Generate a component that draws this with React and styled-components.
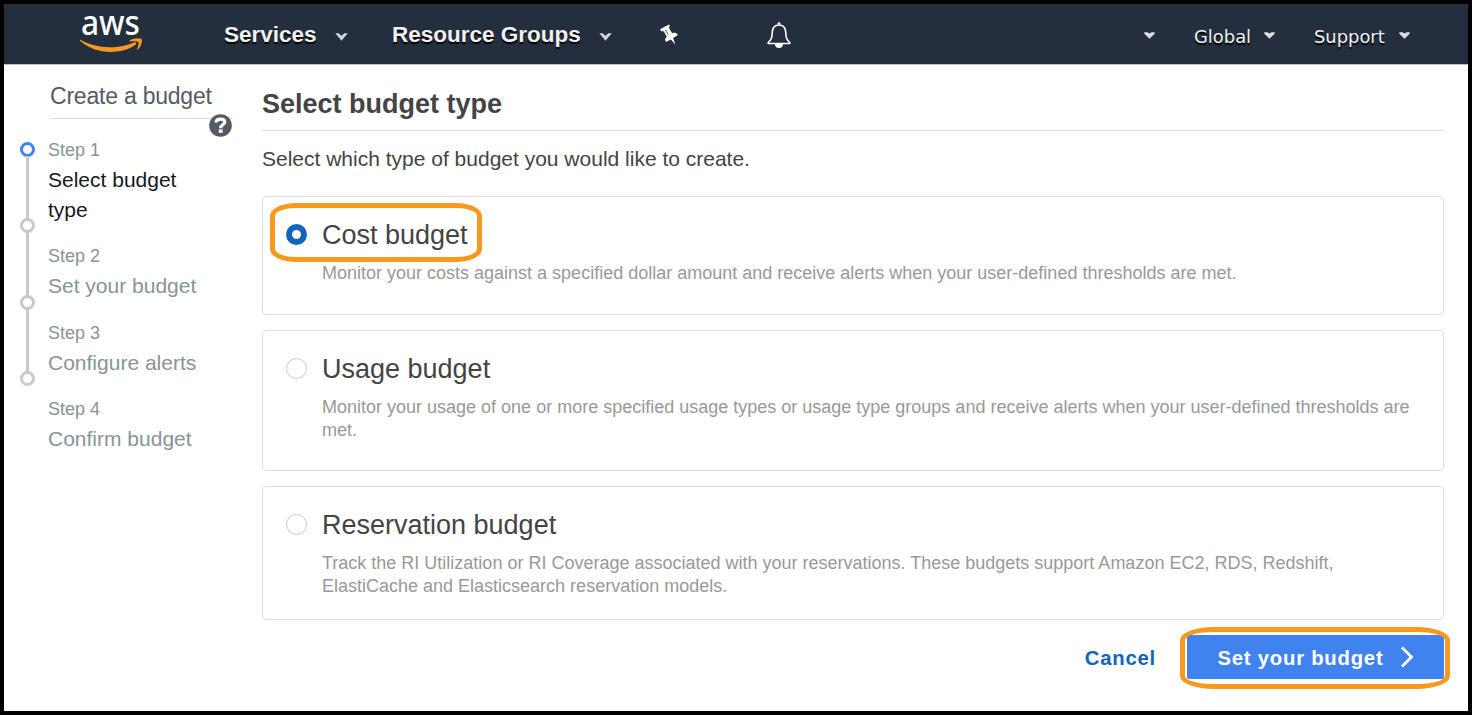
import React from "react";
import styled, { createGlobalStyle } from "styled-components";

const GlobalStyle = createGlobalStyle`
  *, *::before, *::after { box-sizing: border-box; }
  body { margin: 0; background: #fff; font-family: "Liberation Sans", Arial, sans-serif; }
  h1, h2, p, ol { margin: 0; padding: 0; font-weight: normal; }
  button { font-family: inherit; border: 0; background: none; padding: 0; cursor: pointer; }
`;

const Window = styled.div`
  width: 1472px;
  height: 715px;
  border: 4px solid #000;
  background: #fff;
  display: flex;
  flex-direction: column;
  overflow: hidden;
`;

const TopBar = styled.header`
  flex: none;
  height: 61px;
  padding-left: 75px;
  background: #232f3e;
  border-bottom: 1px solid #b9bdc2;
  display: flex;
  align-items: center;
`;

const Logo = styled.svg`
  flex: none;
  width: 66px;
  height: 60px;
  display: block;
  overflow: visible;
`;

const MenuButton = styled.button`
  display: flex;
  align-items: center;
  gap: ${(p) => (p.$small ? 13 : 18)}px;
  margin-left: ${(p) => p.$indent}px;
  padding-top: ${(p) => (p.$small ? 5 : 2)}px;
  color: #f0f0f0;
  font: ${(p) =>
    p.$small
      ? '17.9px/24px "DejaVu Sans", Verdana, sans-serif'
      : 'bold 22.5px/28px "Liberation Sans", Arial, sans-serif'};
  text-shadow: 0 2px 1px #000;
  white-space: nowrap;
`;

const MenuLabel = styled.span`
  width: ${(p) => p.$width}px;
  text-align: left;
`;

const CaretIcon = styled.svg`
  flex: none;
  display: block;
  margin-top: ${(p) => (p.$small ? -2 : 3)}px;
`;

const IconButton = styled.button`
  margin-left: ${(p) => p.$indent}px;
  padding-top: 2px;
  display: flex;
  svg { display: block; }
`;

const Body = styled.div`
  flex: 1;
  display: flex;
`;

const Sidebar = styled.aside`
  flex: none;
  width: 258px;
  padding: 16px 0 0 16px;
`;

const SidebarHeader = styled.div`
  position: relative;
  width: 182px;
  height: 38px;
  margin-left: 30px;
  border-bottom: 1px solid #dedede;
`;

const SidebarTitle = styled.h2`
  font-size: 23px;
  line-height: 30px;
  letter-spacing: -0.22px;
  color: #545b64;
  white-space: nowrap;
`;

const HelpBadge = styled.svg`
  position: absolute;
  right: 0;
  top: 33px;
`;

const Progress = styled.div`
  display: flex;
  gap: 13px;
  margin-top: 16px;
`;

const Rail = styled.div`
  width: 15px;
  padding-top: 7px;
  display: flex;
  flex-direction: column;
  align-items: center;
`;

const Bullet = styled.span`
  flex: none;
  width: 15px;
  height: 15px;
  border-radius: 50%;
  border: 3px solid ${(p) => (p.$active ? "#4183ee" : "#c9c9c9")};
  background: #fff;
`;

const RailLine = styled.span`
  flex: none;
  width: 3px;
  height: 63.4px;
  margin: -1px 0;
  background: #c9c9c9;
`;

const StepList = styled.ol`
  list-style: none;
  display: flex;
  flex-direction: column;
  gap: 16.3px;
`;

const Step = styled.li`
  width: 165px;
  line-height: 30px;
  color: #879596;
`;

const StepNumber = styled.div`
  font-size: 18px;
`;

const StepTitle = styled.div`
  font-size: 21px;
  color: ${(p) => (p.$active ? "#16191f" : "inherit")};
`;

const Main = styled.main`
  width: 1182px;
  padding-top: 21px;
`;

const PageTitle = styled.h1`
  height: 45px;
  border-bottom: 1px solid #dedede;
  font-size: 27px;
  line-height: 36px;
  font-weight: bold;
  color: #444;
`;

const Intro = styled.p`
  margin-top: 13px;
  font-size: 21px;
  line-height: 30px;
  color: #444;
`;

const Cards = styled.div`
  margin-top: 22px;
  display: flex;
  flex-direction: column;
  gap: 15px;
`;

const Card = styled.label`
  position: relative;
  height: ${(p) => p.$height}px;
  border: 1px solid #dfdfdf;
  border-radius: 4px;
  padding: 19px 25px 0 23px;
  display: flex;
  gap: 15px;
`;

const Radio = styled.span`
  flex: none;
  width: 21px;
  height: 21px;
  margin-top: 8px;
  border-radius: 50%;
  background: #fff;
  border: ${(p) => (p.$checked ? "6.5px solid #1166bb" : "1.5px solid #c8c8c8")};
`;

const CardTitle = styled.h2`
  font-size: 27px;
  line-height: 38px;
  color: #444;
`;

const CardText = styled.p`
  margin-top: 8px;
  font-size: 18px;
  line-height: 22.5px;
  color: #999;
`;

const Ring = styled.span`
  position: absolute;
  pointer-events: none;
  border: 5px solid #f8981d;
`;

const CardRing = styled(Ring)`
  left: 7px;
  top: 6px;
  width: 212px;
  height: 59px;
  border-radius: 26px / 13px;
`;

const ButtonRing = styled(Ring)`
  left: -7px;
  top: -8px;
  width: 270px;
  height: 62px;
  border-radius: 34px / 13px;
`;

const Actions = styled.footer`
  margin-top: 15px;
  display: flex;
  justify-content: flex-end;
  align-items: center;
  gap: 31px;
`;

const LinkButton = styled.button`
  padding-top: 2px;
  font-size: 20.3px;
  font-weight: bold;
  letter-spacing: 0.8px;
  line-height: 28px;
  color: #1166bb;
`;

const PrimaryButton = styled.button`
  position: relative;
  width: 257px;
  height: 44px;
  padding-left: 30.5px;
  border-radius: 2px;
  background: #4183ee;
  color: #fff;
  font-size: 20.3px;
  font-weight: bold;
  letter-spacing: 0.77px;
  display: flex;
  align-items: center;
  gap: 17px;
  white-space: nowrap;
`;

const ButtonText = styled.span`
  padding-top: 2px;
`;

const steps = ["Select budget type", "Set your budget", "Configure alerts", "Confirm budget"];

const budgets = [
  {
    title: "Cost budget",
    text: "Monitor your costs against a specified dollar amount and receive alerts when your user-defined thresholds are met.",
    height: 119,
    checked: true,
  },
  {
    title: "Usage budget",
    text: "Monitor your usage of one or more specified usage types or usage type groups and receive alerts when your user-defined thresholds are met.",
    height: 141,
  },
  {
    title: "Reservation budget",
    text: "Track the RI Utilization or RI Coverage associated with your reservations. These budgets support Amazon EC2, RDS, Redshift, ElastiCache and Elasticsearch reservation models.",
    height: 134,
  },
];

function Caret({ small }) {
  return small ? (
    <CaretIcon $small width="11" height="7" viewBox="0 0 11 7">
      <path d="M0.3 0.3H3.5L5.5 1.4L7.5 0.3H10.7V1.8L5.5 6.8L0.3 1.8Z" fill="#ddd" />
    </CaretIcon>
  ) : (
    <CaretIcon width="13" height="8" viewBox="0 0 13 8">
      <path d="M0.3 0.3H3.6L6.5 2.8L9.4 0.3H12.7L6.5 7.7Z" fill="#d5d5d5" />
    </CaretIcon>
  );
}

function Menu({ label, indent, width, small }) {
  return (
    <MenuButton $indent={indent} $small={small}>
      {label && <MenuLabel $width={width}>{label}</MenuLabel>}
      <Caret small={small} />
    </MenuButton>
  );
}

function AwsLogo() {
  return (
    <Logo viewBox="0 0 66 60">
      <text
        x="2"
        y="30.6"
        fill="#fff"
        fontFamily='"Noto Sans", "Open Sans", sans-serif'
        fontSize="33.5"
        fontWeight="500"
        textLength="59"
        lengthAdjust="spacingAndGlyphs"
      >
        aws
      </text>
      <path
        d="M1.4 35.8C10 40.6 20 43.2 30.5 43.2C40 43.2 48.5 41.2 55 38.4C57 37.6 58.2 39.4 56.5 40.8C50 46 40.5 48 31.5 48C20 48 9.5 44 1.3 37C0.6 36.3 0.8 35.5 1.4 35.8Z"
        fill="#f8981d"
      />
      <path
        d="M50.8 36.4C54 34.2 59 33.8 62.2 34.8C64 35.7 62.4 42.6 58.9 45.6C58.3 46.1 57.8 45.8 58.1 45.1C59 42.5 60.2 39.2 59.4 38C58.5 36.8 54.5 37.2 51.4 37.5C50.6 37.6 50.2 36.9 50.8 36.4Z"
        fill="#f8981d"
      />
    </Logo>
  );
}

function PinIcon() {
  return (
    <svg width="20" height="22" viewBox="0 0 20 22">
      <path
        d="M0.6 5L8.4 0.8C9.4 0.5 10.2 1.6 9.6 2.6L8.9 3.8L12.2 9.2C14.2 8.4 16.6 8.8 17.6 10.6L17.4 11.6L13.1 14.1L15.4 20.8L11 15.4L6.4 17.8L5.4 17.2C4.8 15.4 5.3 13.8 6.8 12.7L3.6 7.2L2.2 7.2C0.8 7.3 -0.2 5.8 0.6 5Z"
        fill="#fff"
      />
      <path d="M5.4 6L8.2 10.8" stroke="#232f3e" strokeWidth="0.8" />
    </svg>
  );
}

function BellIcon() {
  return (
    <svg width="24" height="27" viewBox="0 0 24 27">
      <path
        d="M12 3C7.5 3 5.6 6 5.3 10C5 15.5 4.5 17.8 1.2 20.5V21.5H22.8V20.5C19.5 17.8 19 15.5 18.7 10C18.4 6 16.5 3 12 3Z"
        fill="none"
        stroke="#fff"
        strokeWidth="1.6"
        strokeLinejoin="round"
      />
      <path d="M10.6 2.5V1.6A1.4 1.4 0 0 1 13.4 1.6V2.5Z" fill="#fff" />
      <path d="M8 22H16A4 4 0 0 1 8 22Z" fill="#fff" />
    </svg>
  );
}

function HelpIcon() {
  return (
    <HelpBadge width="23" height="23" viewBox="0 0 23 23">
      <circle cx="11.5" cy="11.5" r="11.3" fill="#545b64" />
      <path
        d="M7.1 8.6C7.1 6 8.9 5.1 11.6 5.1C14.2 5.1 15.7 6.3 15.7 8.1C15.7 10.8 11.6 10.8 11.6 14.2"
        fill="none"
        stroke="#fff"
        strokeWidth="3.3"
      />
      <rect x="9.8" y="15.4" width="3.8" height="3.4" fill="#fff" />
    </HelpBadge>
  );
}

export default function App() {
  return (
    <Window>
      <GlobalStyle />
      <TopBar>
        <AwsLogo />
        <Menu label="Services" indent={79} width={93} />
        <Menu label="Resource Groups" indent={44} width={189} />
        <IconButton $indent={48}>
          <PinIcon />
        </IconButton>
        <IconButton $indent={87}>
          <BellIcon />
        </IconButton>
        <Menu small indent={353} />
        <Menu small label="Global" indent={39} width={57} />
        <Menu small label="Support" indent={39} width={72} />
      </TopBar>
      <Body>
        <Sidebar>
          <SidebarHeader>
            <SidebarTitle>Create a budget</SidebarTitle>
            <HelpIcon />
          </SidebarHeader>
          <Progress>
            <Rail>
              {steps.map((title, i) => (
                <React.Fragment key={title}>
                  {i > 0 && <RailLine />}
                  <Bullet $active={i === 0} />
                </React.Fragment>
              ))}
            </Rail>
            <StepList>
              {steps.map((title, i) => (
                <Step key={title}>
                  <StepNumber>Step {i + 1}</StepNumber>
                  <StepTitle $active={i === 0}>{title}</StepTitle>
                </Step>
              ))}
            </StepList>
          </Progress>
        </Sidebar>
        <Main>
          <PageTitle>Select budget type</PageTitle>
          <Intro>Select which type of budget you would like to create.</Intro>
          <Cards>
            {budgets.map((b) => (
              <Card key={b.title} $height={b.height}>
                <Radio $checked={b.checked} />
                <div>
                  <CardTitle>{b.title}</CardTitle>
                  <CardText>{b.text}</CardText>
                </div>
                {b.checked && <CardRing />}
              </Card>
            ))}
          </Cards>
          <Actions>
            <LinkButton>Cancel</LinkButton>
            <PrimaryButton>
              <ButtonText>Set your budget</ButtonText>
              <svg width="14" height="22" viewBox="0 0 14 22">
                <path d="M2 1.5L11.5 11L2 20.5" fill="none" stroke="#fff" strokeWidth="2.8" />
              </svg>
              <ButtonRing />
            </PrimaryButton>
          </Actions>
        </Main>
      </Body>
    </Window>
  );
}
